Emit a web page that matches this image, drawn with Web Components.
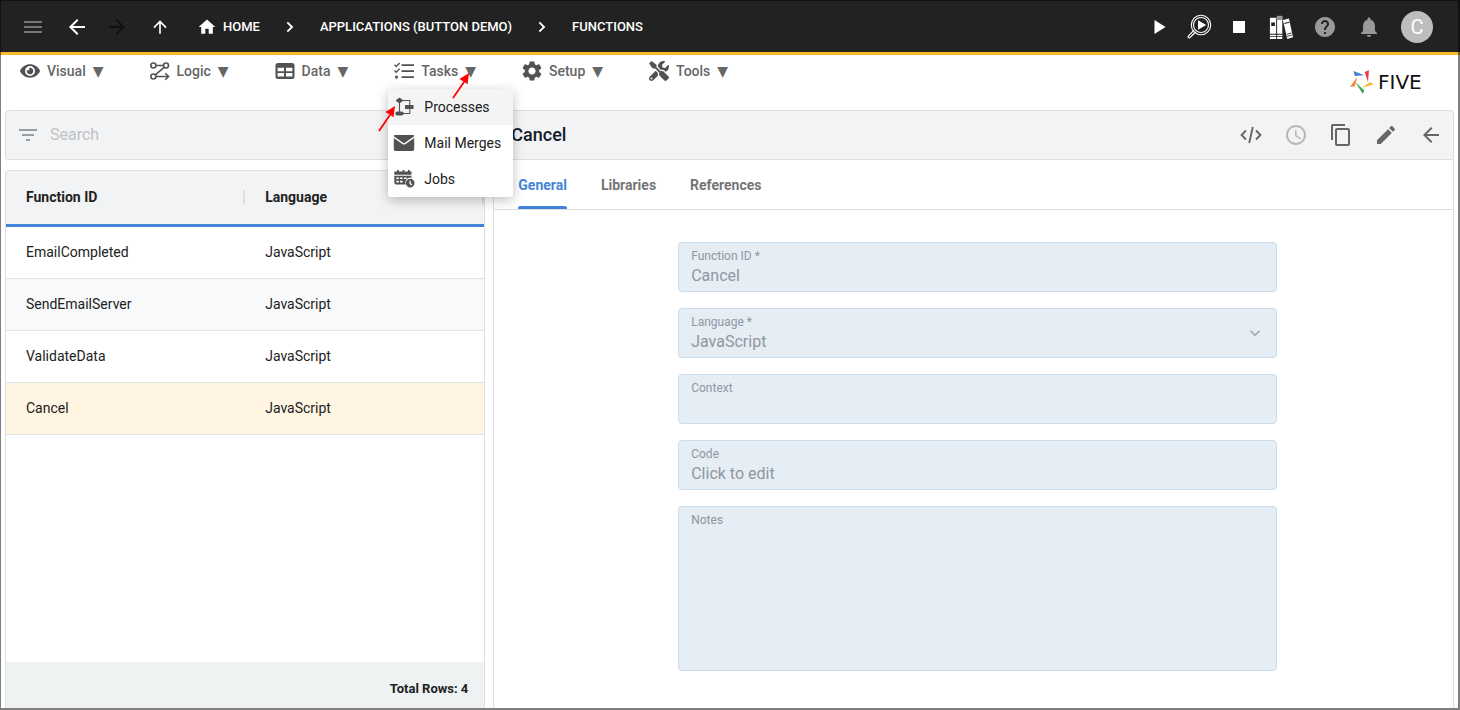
<!DOCTYPE html>
<html lang="en">
<head>
<meta charset="utf-8">
<title>Functions</title>
<style>
  html, body { margin: 0; }
  body { font-family: Roboto, "Liberation Sans", sans-serif; font-size: 14px; line-height: 20px; color: #212121; background: #fff; }
</style>
</head>
<body>
<five-app></five-app>

<script>
const RESET = `
  *, *::before, *::after { box-sizing: border-box; }
  button, input, select, textarea { font: inherit; color: inherit; margin: 0; padding: 0; border: 0; background: none; }
  button { display: flex; align-items: center; justify-content: center; cursor: pointer; }
  a { color: inherit; text-decoration: none; }
`;

class Base extends HTMLElement {
  connectedCallback() {
    if (this.shadowRoot) return;
    const t = document.createElement('template');
    t.innerHTML = `<style>${RESET}${this.css()}</style>${this.html()}`;
    this.attachShadow({ mode: 'open' }).append(t.content.cloneNode(true));
  }
}

/* Icon set: [viewBox, markup] */
const ICONS = {
  menu: ['0 0 24 24', '<path d="M3 6h18v2H3zM3 11h18v2H3zM3 16h18v2H3z"/>'],
  back: ['0 0 24 24', '<path d="M20 11H7.83l5.59-5.59L12 4l-8 8 8 8 1.41-1.41L7.83 13H20z"/>'],
  forward: ['0 0 24 24', '<path d="M4 11h12.17l-5.59-5.59L12 4l8 8-8 8-1.41-1.41L16.17 13H4z"/>'],
  up: ['0 0 24 24', '<path d="M4 12l1.41 1.41L11 7.83V20h2V7.83l5.58 5.59L20 12l-8-8z"/>'],
  home: ['0 0 24 24', '<path d="M10 20v-6h4v6h5v-8h3L12 3 2 12h3v8z"/>'],
  chevron: ['0 0 24 24', '<path d="M9.6 5.6 8 7.2l4.8 4.8L8 16.8l1.6 1.6L16 12z"/>'],
  down: ['0 0 24 24', '<path d="M6.2 7.8 12 13.600l5.800-5.800L19.600 9.600 12 17.200 4.400 9.600z"/>'],
  play: ['0 0 24 24', '<path d="M7.500 5v14L18.500 12z"/>'],
  debug: ['0 0 24 24', '<g fill="none" stroke="currentColor"><circle cx="14" cy="10" r="9.700" stroke-width="1.100"/><circle cx="14" cy="10" r="7.500" stroke-width="1.100"/><path d="M7.200 15 1.200 21.200q-.5 1.600 1.300 1.700L8.800 17" stroke-width="1.200"/></g><path d="M11 5.300v9.400l8.200-4.700z"/>'],
  stop: ['0 0 24 24', '<path d="M6 6h12v12H6z"/>'],
  books: ['0 0 26 26', '<path d="M1 3h7v23H1z"/><path d="M8.600 1h5.800v25H8.600z"/><path d="m15 5.500 6.600-1.800L26 24l-6.200 1.900z"/><path fill="#222" d="M2.400 8h4v4h-4zM1 20.300h13.400v1H1zM1 23h13.400v.9H1zM8 4.500h.8V26H8zM8.600 4.600h5.800v.6H8.600zM16.600 8.800l5.400-1.400.2.900-5.400 1.400zM19 20.500l5.400-1.600.2.900-5.400 1.600zM19.500 22.700l5.500-1.500.2.800-5.500 1.500z"/><path fill="#999" d="M8.800 1h5.600v3.600H8.800z"/>'],
  help: ['0 0 24 24', '<path d="M12 2C6.480 2 2 6.480 2 12s4.480 10 10 10 10-4.480 10-10S17.520 2 12 2zm1 17h-2v-2h2v2zm2.070-7.750-.9.920C13.450 12.900 13 13.500 13 15h-2v-.5c0-1.100.45-2.100 1.170-2.830l1.240-1.260c.37-.36.590-.86.590-1.410 0-1.100-.9-2-2-2s-2 .9-2 2H8c0-2.210 1.790-4 4-4s4 1.790 4 4c0 .88-.36 1.680-.93 2.250z"/>'],
  bell: ['0 0 24 24', '<path d="M12 22c1.100 0 2-.9 2-2h-4c0 1.100.9 2 2 2zm6-6v-5c0-3.070-1.630-5.640-4.500-6.320V4c0-.83-.67-1.500-1.500-1.500s-1.500.67-1.500 1.500v.68C7.640 5.360 6 7.920 6 11v5l-2 2v1h16v-1z"/>'],
  eye: ['0 0 576 512', '<path d="M572.520 241.400C518.290 135.590 410.930 64 288 64S57.680 135.640 3.480 241.410a32.350 32.350 0 0 0 0 29.190C57.710 376.410 165.070 448 288 448s230.320-71.640 284.520-177.410a32.350 32.350 0 0 0 0-29.190zM288 400a144 144 0 1 1 144-144 143.930 143.930 0 0 1-144 144zm0-240a95.310 95.310 0 0 0-25.310 3.790 47.850 47.850 0 0 1-66.900 66.900A95.780 95.780 0 1 0 288 160z"/>'],
  logic: ['0 0 20 20', '<g fill="none" stroke="currentColor" stroke-width="1.600"><circle cx="3.400" cy="4.500" r="2.500"/><circle cx="16" cy="4.500" r="2.500"/><circle cx="3.400" cy="15.500" r="2.500"/><path d="M6 4.500h7.500M14.200 6.300 5.300 13.800M6 15.500h12M15.300 12.300l3.200 3.200-3.200 3.200"/></g>'],
  data: ['0 0 20 20', '<path fill-rule="evenodd" d="M3 2h14a2.500 2.500 0 0 1 2.500 2.500v11A2.500 2.500 0 0 1 17 18H3a2.500 2.500 0 0 1-2.500-2.500v-11A2.500 2.500 0 0 1 3 2zM2.600 6.700v3.500H9V6.700zM11 6.700v3.500h6.400V6.700zM2.600 12v3.600H9V12zM11 12v3.600h6.400V12z"/>'],
  tasks: ['0 0 20 20', '<path d="M7.500 3.200H20v1.900H7.500zM7.500 9.200H20v1.900H7.500zM7.500 15.200H20v1.900H7.500z"/><circle cx="2.500" cy="16.100" r="1.600"/><path fill="none" stroke="currentColor" stroke-width="1.400" d="m.6 3.800 1.500 1.600L5.600 2M.6 9.600l1.500 1.600 3.500-3.400"/>'],
  gear: ['2 2 20 20', '<path d="M19.140 12.940c.04-.3.060-.61.060-.94 0-.32-.02-.64-.07-.94l2.030-1.580c.18-.14.230-.41.120-.61l-1.920-3.320c-.12-.22-.37-.29-.59-.22l-2.390.96c-.5-.38-1.030-.7-1.620-.94l-.36-2.540c-.04-.24-.24-.41-.48-.41h-3.840c-.24 0-.43.170-.47.410l-.36 2.540c-.59.240-1.130.570-1.620.940l-2.390-.96c-.22-.08-.47 0-.59.220L2.740 8.870c-.12.210-.08.470.120.610l2.030 1.580c-.05.3-.09.630-.09.940s.02.640.070.940l-2.030 1.580c-.18.140-.23.410-.12.610l1.920 3.320c.12.220.370.290.590.220l2.390-.96c.5.380 1.030.7 1.620.940l.36 2.540c.05.240.240.410.480.410h3.840c.24 0 .44-.17.470-.41l.36-2.540c.59-.24 1.130-.56 1.620-.94l2.390.96c.22.080.470 0 .59-.22l1.920-3.320c.12-.22.070-.47-.12-.61zM12 15.600c-1.980 0-3.600-1.620-3.600-3.600s1.620-3.600 3.600-3.600 3.600 1.620 3.600 3.600-1.620 3.600-3.600 3.600z"/>'],
  tools: ['0 0 512 512', '<path d="M501.100 395.700L384 278.600c-23.100-23.100-57.600-27.600-85.400-13.900L192 158.100V96L64 0 0 64l96 128h62.100l106.600 106.600c-13.600 27.800-9.200 62.300 13.900 85.400l117.100 117.100c14.600 14.600 38.200 14.600 52.700 0l52.700-52.700c14.500-14.600 14.500-38.200 0-52.700zM331.700 225c28.300 0 54.900 11 74.900 31l19.400 19.400c15.800-6.900 30.800-16.500 43.800-29.500 37.100-37.100 49.700-89.300 37.900-136.700-2.200-9-13.500-12.100-20.100-5.500l-74.400 74.400-67.900-11.300L334 98.900l74.400-74.400c6.600-6.600 3.400-17.900-5.700-20.200-47.400-11.700-99.600.9-136.600 37.900-28.500 28.500-41.900 66.100-41.200 103.600l82.100 82.100c8.100-1.900 16.500-2.900 24.700-2.900zm-103.900 82l-56.700-56.700L18.700 402.800c-25 25-25 65.500 0 90.500s65.500 25 90.500 0l123.600-123.600c-7.600-19.900-9.900-41.600-5-62.700zM64 472c-13.200 0-24-10.800-24-24 0-13.300 10.700-24 24-24s24 10.700 24 24c0 13.200-10.700 24-24 24z"/>'],
  process: ['0 0 20 20', '<path d="M1.500 3.500 5.500.6l4 2.900-4 2.900zM11 8h8.500v4H11zM3.300 14.500h4.400a2 2 0 0 1 0 4H3.300a2 2 0 0 1 0-4z"/><path fill="none" stroke="currentColor" stroke-width="1.100" d="M5.500 6v9M9 3.500h6.800V8M9 16.500h6.800V12"/>'],
  mail: ['0 0 20 20', '<path d="M1 2h18a1.200 1.200 0 0 1 1.200 1.200L10.600 10q-.6.400-1.200 0L-.2 3.200A1.200 1.200 0 0 1 1 2zM-.2 5l8.900 6.200q1.300.8 2.600 0L20.200 5v11.300A1.700 1.700 0 0 1 18.500 18h-17A1.700 1.700 0 0 1-.2 16.300z"/>'],
  jobs: ['0 0 20 20', '<path d="M3 1h1.800v1.500h3.700V1h1.800v1.500H14V1h1.800v1.500h1.700V5.800H.3V2.500H3z"/><path fill-rule="evenodd" d="M.3 6.700h17.200v2a5 5 0 0 0-5.700 6.800H2.300a2 2 0 0 1-2-2zM2.300 8.400v1.700h2.600V8.400zM6 8.400v1.700h2.700V8.400zM10 8.400v1.700h2.700V8.400zM2.300 11.700v1.700h2.600v-1.700zM6 11.700v1.700h2.700v-1.700z"/><path fill-rule="evenodd" d="M16.200 9.800a4.300 4.300 0 1 1 0 8.600 4.300 4.300 0 0 1 0-8.600zM15.400 11.700v3l2.100 1.700.8-1-1.600-1.300v-2.400z"/>'],
  filter: ['0 0 24 24', '<path d="M10 18h4v-2h-4zM3 6v2h18V6zM6 13h12v-2H6z"/>'],
  code: ['0 0 24 24', '<path fill="none" stroke="currentColor" stroke-width="1.900" d="M7 7.500 2.600 12 7 16.500M17 7.500l4.400 4.500-4.400 4.500M13.800 4l-3.600 16"/>'],
  clock: ['0 0 24 24', '<path d="M11.990 2C6.470 2 2 6.480 2 12s4.470 10 9.990 10C17.520 22 22 17.520 22 12S17.520 2 11.990 2zM12 20c-4.420 0-8-3.580-8-8s3.580-8 8-8 8 3.580 8 8-3.580 8-8 8zm.5-13H11v6l5.250 3.150.75-1.230-4.500-2.670z"/>'],
  copy: ['0 0 24 24', '<path d="M16 1H4c-1.100 0-2 .9-2 2v14h2V3h12V1zm3 4H8c-1.100 0-2 .9-2 2v14c0 1.100.9 2 2 2h11c1.100 0 2-.9 2-2V7c0-1.100-.9-2-2-2zm0 16H8V7h11v14z"/>'],
  edit: ['0 0 24 24', '<path d="M3 17.250V21h3.750L17.810 9.940l-3.750-3.750L3 17.250zM20.710 7.040c.39-.39.390-1.020 0-1.410l-2.340-2.340c-.39-.39-1.020-.39-1.410 0l-1.830 1.830 3.750 3.750 1.830-1.830z"/>'],
  star: ['0 0 24 24', '<path fill="#3f7fd6" d="M3.600 1 14 5.300 4.800 6z"/><path fill="#e8403f" d="M14.600 2 19 .3 18 12z"/><path fill="#f8b72c" d="m11.800 18 7.800-5.700 4.100 2z"/><path fill="#3aa655" d="m5.300 12 9 8.500L12.800 24z"/><path fill="#f58232" d="M7.300 6.700 4.800 16.200 0 17z"/>'],
};

class UiIcon extends Base {
  css() {
    const size = this.getAttribute('size') || 24;
    return `:host { display: block; flex: none; width: ${size}px; height: ${size}px; }
      svg { display: block; width: 100%; height: 100%; overflow: visible; fill: currentColor; }`;
  }
  html() {
    const [box, body] = ICONS[this.getAttribute('name')];
    return `<svg viewBox="${box}" aria-hidden="true">${body}</svg>`;
  }
}

class TopBar extends Base {
  css() { return `
    :host { display: block; background: #222; border-bottom: 3px solid #fbb829; color: #fff; }
    header { display: flex; align-items: center; height: 52px; padding: 2px 27px 0 11px; }
    .nav { display: grid; grid-template-columns: 44px 44px 36px 50px; }
    .nav button, .actions button { height: 40px; }
    .dim { color: #777; } .off { color: #111; }
    nav { display: flex; align-items: center; gap: 20px; padding-left: 12px; font-size: 13px; font-weight: 500; }
    nav a { display: flex; align-items: center; gap: 6px; }
    .actions { display: flex; align-items: center; margin-left: auto; }
    .actions button { width: 40px; }
    .actions .wide { width: 44px; }
    .soft { color: #999; }
    .avatar { display: flex; align-items: center; justify-content: center; width: 32px; height: 32px; margin-left: 10px; border-radius: 50%; background: #bdbdbd; font-size: 20px; }
  `; }
  html() { return `
    <header>
      <div class="nav">
        <button class="dim" aria-label="Menu"><ui-icon name="menu"></ui-icon></button>
        <button aria-label="Back"><ui-icon name="back"></ui-icon></button>
        <button class="off" aria-label="Forward" disabled><ui-icon name="forward"></ui-icon></button>
        <button aria-label="Up"><ui-icon name="up" size="20"></ui-icon></button>
      </div>
      <nav aria-label="Breadcrumb">
        <a href="#home"><ui-icon name="home" size="20"></ui-icon>HOME</a>
        <ui-icon name="chevron" size="20"></ui-icon>
        <a href="#app">APPLICATIONS (BUTTON DEMO)</a>
        <ui-icon name="chevron" size="20"></ui-icon>
        <a href="#functions">FUNCTIONS</a>
      </nav>
      <div class="actions">
        <button aria-label="Run"><ui-icon name="play"></ui-icon></button>
        <button aria-label="Inspect"><ui-icon name="debug"></ui-icon></button>
        <button aria-label="Stop"><ui-icon name="stop"></ui-icon></button>
        <button class="wide" aria-label="Library"><ui-icon name="books"></ui-icon></button>
        <button class="wide soft" aria-label="Help"><ui-icon name="help"></ui-icon></button>
        <button class="wide soft" aria-label="Notifications"><ui-icon name="bell"></ui-icon></button>
        <span class="avatar">C</span>
      </div>
    </header>`; }
}

class NavMenu extends Base {
  css() { return `
    :host { display: block; position: relative; }
    .trigger { gap: 7px; height: 32px; color: #666; font-weight: 500; }
    ui-icon { color: #525252; }
    .mark { font-family: "DejaVu Sans", sans-serif; }
  `; }
  html() { return `
    <button class="trigger" aria-haspopup="menu"><ui-icon name="${this.getAttribute('icon')}" size="20"></ui-icon>${this.getAttribute('label')}<span class="mark">▼</span></button>
    <slot></slot>`; }
}

class DropMenu extends Base {
  css() { return `
    :host { display: block; position: absolute; z-index: 5; top: 34px; left: -6px; background: #fff; border-radius: 3px; box-shadow: 0 3px 12px rgba(0,0,0,.25); overflow: hidden; }
  `; }
  html() { return `<slot></slot>`; }
}

class DropItem extends Base {
  css() { return `
    :host { display: block; }
    :host([active]) { background: #f4f4f4; }
    button { justify-content: flex-start; gap: 10px; width: 100%; height: 36px; padding: 0 12px 0 6px; white-space: nowrap; }
    ui-icon { color: #525252; }
  `; }
  html() { return `<button role="menuitem"><ui-icon name="${this.getAttribute('icon')}" size="20"></ui-icon><slot></slot></button>`; }
}

class PointerArrow extends Base {
  css() { return `
    :host { position: absolute; z-index: 6; pointer-events: none; }
    svg { display: block; width: 18px; height: 26px; overflow: visible; }
  `; }
  html() { return `<svg viewBox="0 0 18 26" aria-hidden="true"><path d="M1 25 12 9" stroke="#f00" stroke-width="1.800"/><path d="M17 0 15.500 11.200 7.500 6z" fill="#f00"/></svg>`; }
}

class MenuBar extends Base {
  css() { return `
    :host { display: block; }
    .bar { display: flex; justify-content: space-between; align-items: flex-start; height: 55px; padding: 0 23px 0 20px; }
    .menus { display: flex; gap: 46px; }
    .first { top: 18px; left: 58px; }
    .second { top: 51px; left: -16px; }
    .logo { display: flex; align-items: center; gap: 4px; min-width: 87px; padding-top: 15px; line-height: 24px; font-family: "DejaVu Sans", sans-serif; font-size: 20px; color: #111; }
  `; }
  html() { return `
    <div class="bar">
      <div class="menus">
        <nav-menu icon="eye" label="Visual"></nav-menu>
        <nav-menu icon="logic" label="Logic"></nav-menu>
        <nav-menu icon="data" label="Data"></nav-menu>
        <nav-menu icon="tasks" label="Tasks">
          <drop-menu role="menu">
            <drop-item icon="process" active>Processes</drop-item>
            <drop-item icon="mail">Mail Merges</drop-item>
            <drop-item icon="jobs">Jobs</drop-item>
          </drop-menu>
          <pointer-arrow class="first"></pointer-arrow>
          <pointer-arrow class="second"></pointer-arrow>
        </nav-menu>
        <nav-menu icon="gear" label="Setup"></nav-menu>
        <nav-menu icon="tools" label="Tools"></nav-menu>
      </div>
      <a class="logo" href="#five"><ui-icon name="star"></ui-icon>FIVE</a>
    </div>`; }
}

class RecordList extends Base {
  css() { return `
    :host { display: flex; flex-direction: column; gap: 10px; }
    .search { display: flex; align-items: center; gap: 10px; height: 50px; padding: 0 10px; border: 1px solid #dcdee0; border-radius: 4px; background: #f1f3f4; color: #95a0a5; }
    input { flex: 1; min-width: 0; height: 32px; padding-bottom: 2px; font-size: 16px; outline: 0; }
    input::placeholder { color: #c0c2c4; opacity: 1; }
    .grid { flex: 1; display: flex; flex-direction: column; border: 1px solid #dcdee0; border-bottom: 0; border-radius: 4px 4px 0 0; overflow: hidden; }
    table { width: 100%; border-collapse: separate; border-spacing: 0; table-layout: fixed; }
    th, td { height: 52px; padding: 0 0 2px 20px; text-align: left; font-weight: 400; border-bottom: 1px solid #e2e4e6; }
    th { height: 56px; padding-bottom: 1px; background: #f1f3f4; border-bottom: 3px solid #4285d8; font-weight: 700; }
    th div { display: flex; justify-content: space-between; align-items: center; }
    th div::after { content: ""; width: 2px; height: 14px; background: #dcdee0; }
    tr:nth-child(even) td { background: #f8f9fb; }
    tr.on td { background: #fff5e2; }
    footer { margin-top: auto; height: 46px; padding: 17px 16px 0; background: #eef2f3; text-align: right; font-size: 13px; font-weight: 700; }
  `; }
  html() {
    const rows = ['EmailCompleted', 'SendEmailServer', 'ValidateData', 'Cancel'];
    return `
    <div class="search"><ui-icon name="filter"></ui-icon><input type="search" placeholder="Search" aria-label="Search"></div>
    <div class="grid">
      <table>
        <thead><tr><th><div>Function ID</div></th><th><div>Language</div></th></tr></thead>
        <tbody>${rows.map(r => `<tr${r === 'Cancel' ? ' class="on"' : ''}><td>${r}</td><td>JavaScript</td></tr>`).join('')}</tbody>
      </table>
      <footer>Total Rows: 4</footer>
    </div>`; }
}

class FormField extends Base {
  css() { return `
    :host { display: block; }
    .box { position: relative; display: flex; flex-direction: column; min-height: 50px; padding: 5px 12px 4px; border: 1px solid #cbddec; border-radius: 4px; background: #e5edf5; color: #8f979f; }
    label { font-size: 12px; line-height: 16px; }
    input, select, textarea { width: 100%; height: 23px; font-size: 16px; line-height: 23px; color: #8f979f; opacity: 1; appearance: none; resize: none; }
    textarea { height: 138px; }
    ui-icon { position: absolute; right: 13px; top: 16px; color: #a7aeb5; }
  `; }
  html() {
    const type = this.getAttribute('type') || 'text', v = this.getAttribute('value') || '';
    const control = {
      text: `<input id="c" type="text" value="${v}" disabled>`,
      select: `<select id="c" disabled><option>${v}</option></select><ui-icon name="down" size="16"></ui-icon>`,
      area: `<textarea id="c" disabled></textarea>`,
    }[type];
    return `<div class="box"><label for="c">${this.getAttribute('label')}</label>${control}</div>`; }
}

class RecordDetail extends Base {
  css() { return `
    :host { display: flex; flex-direction: column; border: 1px solid #dcdee0; border-width: 0 1px; border-radius: 4px 4px 0 0; }
    .title { display: flex; align-items: center; justify-content: space-between; height: 50px; padding-left: 17px; margin: 0 -1px; border: 1px solid #dcdee0; border-radius: 4px 4px 0 0; background: #f1f3f4; }
    h1 { margin: 0; font-size: 18px; line-height: 24px; font-weight: 500; color: #111b2b; }
    .tools { display: flex; color: #666; }
    .tools button { width: 45px; height: 40px; }
    .tools button:disabled { color: #b5b7b8; }
    .tabs { display: flex; gap: 34px; height: 50px; padding-left: 24px; border-bottom: 1px solid #dcdee0; }
    .tabs button { color: #757575; font-weight: 700; }
    .tabs button[aria-selected="true"] { color: #4285d8; position: relative; }
    .tabs button[aria-selected="true"]::after { content: ""; position: absolute; inset: auto 0 0; height: 3px; border-radius: 2px 2px 0 0; background: #4285d8; }
    .body { padding: 32px 0 32px 8px; }
    form { display: flex; flex-direction: column; gap: 16px; width: 63%; max-width: 599px; margin: 0 auto; }
  `; }
  html() { return `
    <div class="title"><h1>Cancel</h1>
      <div class="tools">
        <button aria-label="Code"><ui-icon name="code"></ui-icon></button>
        <button aria-label="History" disabled><ui-icon name="clock"></ui-icon></button>
        <button aria-label="Copy"><ui-icon name="copy"></ui-icon></button>
        <button aria-label="Edit"><ui-icon name="edit"></ui-icon></button>
        <button aria-label="Close"><ui-icon name="back"></ui-icon></button>
      </div>
    </div>
    <div class="tabs" role="tablist">
      <button role="tab" aria-selected="true">General</button>
      <button role="tab">Libraries</button>
      <button role="tab">References</button>
    </div>
    <div class="body"><form>
      <form-field label="Function ID *" value="Cancel"></form-field>
      <form-field label="Language *" type="select" value="JavaScript"></form-field>
      <form-field label="Context"></form-field>
      <form-field label="Code" value="Click to edit"></form-field>
      <form-field label="Notes" type="area"></form-field>
    </form></div>`; }
}

class FiveApp extends Base {
  css() { return `
    :host { display: flex; flex-direction: column; min-height: 100vh; position: relative; }
    main { flex: 1; display: grid; grid-template-columns: minmax(0, 1fr) minmax(0, 2fr); gap: 8px; padding: 0 6px 2px 5px; }
    .frame { position: absolute; inset: 0; border: solid rgba(0,0,0,.5); border-width: 1px 2px 2px 1px; pointer-events: none; }
  `; }
  html() { return `
    <top-bar></top-bar>
    <menu-bar></menu-bar>
    <main><record-list></record-list><record-detail></record-detail></main>
    <div class="frame"></div>`; }
}

Object.entries({
  'ui-icon': UiIcon, 'top-bar': TopBar, 'nav-menu': NavMenu, 'drop-menu': DropMenu, 'drop-item': DropItem,
  'pointer-arrow': PointerArrow, 'menu-bar': MenuBar, 'record-list': RecordList, 'form-field': FormField,
  'record-detail': RecordDetail, 'five-app': FiveApp,
}).forEach(([name, cls]) => customElements.define(name, cls));
</script>
</body>
</html>
